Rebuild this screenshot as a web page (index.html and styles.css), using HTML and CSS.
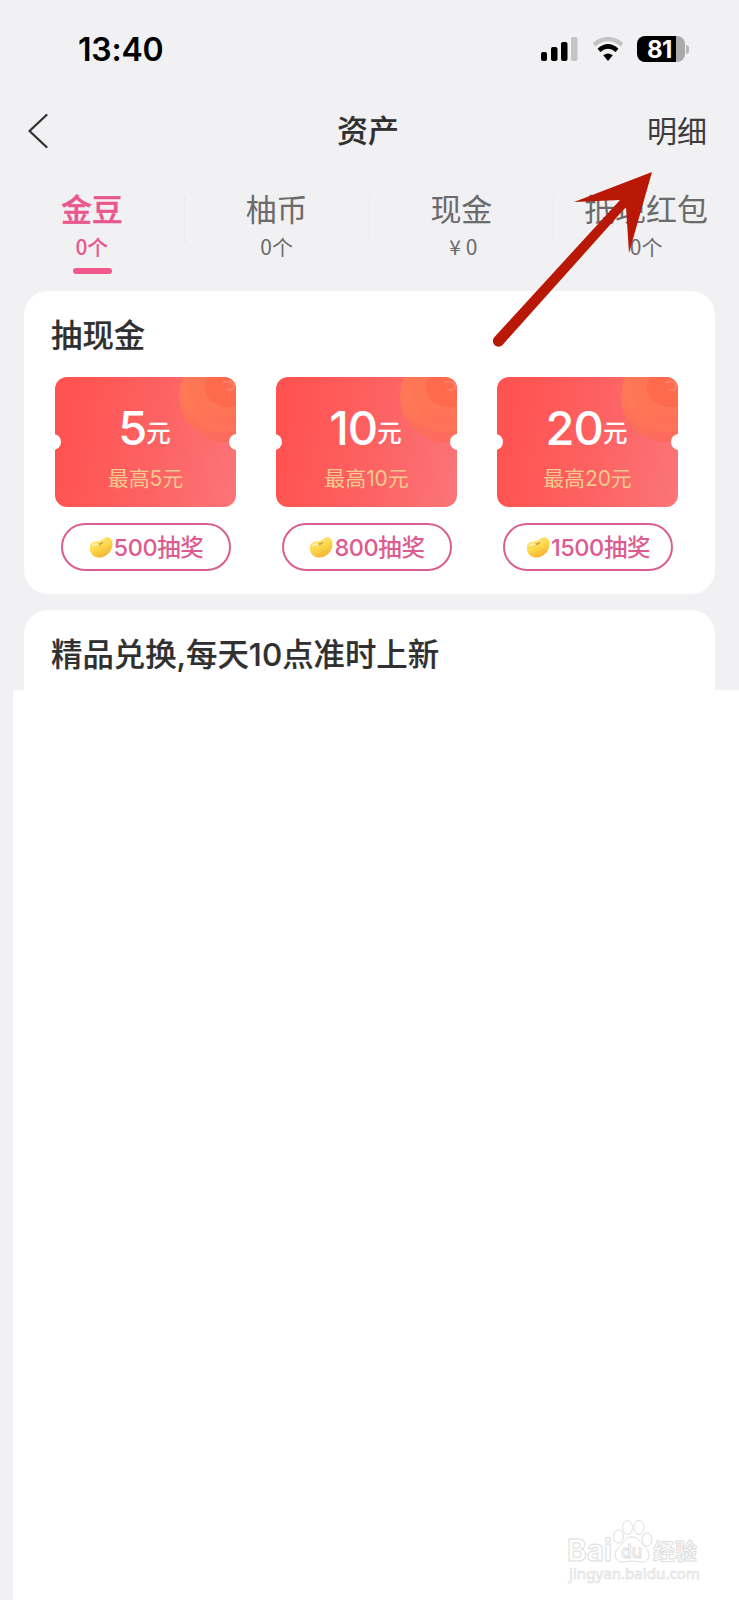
FILE: index.html
```html
<!DOCTYPE html>
<html lang="zh-CN">
<head>
<meta charset="utf-8">
<title>资产</title>
<link rel="stylesheet" href="styles.css">
</head>
<body>
<svg class="defs" width="0" height="0" aria-hidden="true">
  <defs>
    <linearGradient id="beanFill" x1="0.2" y1="0" x2="0.7" y2="1"><stop offset="0" stop-color="#ffeb8c"/><stop offset="0.5" stop-color="#fbd74c"/><stop offset="1" stop-color="#f5ae2c"/></linearGradient>
    <linearGradient id="ringFill" x1="0" y1="0" x2="0" y2="1"><stop offset="0" stop-color="#ff7656"/><stop offset="0.6" stop-color="#ff7655"/><stop offset="1" stop-color="#fd6a5c"/></linearGradient>
    <symbol id="bean" viewBox="0 0 24 22">
      <path d="M1 14C0 8.500 3 5.500 7 5.500C10 5.500 12 4.500 14 3C18 0 23 1 23.500 7C24 13 20 19 14 21C8 23 2 20 1 14Z" fill="url(#beanFill)"/>
      <path d="M4 9.500C5.500 8 7 8 8.500 8.300" stroke="#fff6bd" stroke-width="1.500" fill="none" stroke-linecap="round"/>
      <path d="M10 8C11.500 8.500 13 7.800 13.500 6.500" stroke="#9b7022" stroke-width=".9" fill="none" stroke-linecap="round"/>
    </symbol>
    <symbol id="medal" viewBox="0 0 60 68">
      <circle cx="47" cy="19" r="46" fill="url(#ringFill)"/>
      <path d="M4 0C-1 30 15 48 33 53C43 56 52 55 60 52V46C35 54 12 38 10 0Z" fill="#ff7f5e" opacity=".3"/>
      <ellipse cx="50" cy="10" rx="23" ry="20" fill="#ff694c"/>
      <path d="M45 6C50 3 56 5 56 9C56 13 52 14 48 12" fill="none" stroke="#ff8a77" stroke-width="2.500" opacity=".6"/>
    </symbol>
  </defs>
</svg>
<div class="screen">
  <div class="statusbar">
    <span class="clock">13:40</span>
    <div class="indicators">
      <svg class="signal" width="37" height="26" viewBox="0 0 37 26"><rect x="0" y="16" width="6" height="9" rx="2"/><rect x="10" y="11" width="6.500" height="14" rx="2"/><rect x="20" y="6" width="6.500" height="19" rx="2"/><rect x="30" y="1" width="6.500" height="24" rx="2" fill="#c4c4c6"/></svg>
      <svg class="wifi" width="32" height="26" viewBox="0 0 32 26"><path d="M2 8.700Q16-2.700 30 8.700" fill="none" stroke="#c4c4c6" stroke-width="4.400"/><path d="M7 14.300Q16 6.500 25 14.300" fill="none" stroke="#000" stroke-width="4.400"/><path d="M11.200 19.300Q16 15.500 20.800 19.300L16 25Z"/></svg>
      <div class="battery"><span class="level">81</span><span class="nub"></span></div>
    </div>
  </div>
  <header class="navbar">
    <svg class="back" width="22" height="36" viewBox="0 0 22 36"><path d="M19.500 2L2.500 18L19.500 34" fill="none" stroke="#333" stroke-width="2.400" stroke-linecap="round" stroke-linejoin="round"/></svg>
    <h1 class="title">资产</h1>
    <span class="detail">明细</span>
  </header>
  <nav class="tabs">
    <div class="tab active"><span class="name">金豆</span><span class="count">0个</span></div>
    <div class="tab"><span class="name">柚币</span><span class="count">0个</span></div>
    <div class="tab"><span class="name">现金</span><span class="count cash">¥ 0</span></div>
    <div class="tab"><span class="name">抵现红包</span><span class="count">0个</span></div>
  </nav>
  <section class="card draw">
    <h2 class="heading">抽现金</h2>
    <div class="offers">
      <div class="offer">
        <div class="ticket"><svg class="medal"><use href="#medal"/></svg><div class="amount">5<small>元</small></div><div class="limit">最高5元</div></div>
        <div class="button"><svg class="bean"><use href="#bean"/></svg><span>500抽奖</span></div>
      </div>
      <div class="offer">
        <div class="ticket"><svg class="medal"><use href="#medal"/></svg><div class="amount">10<small>元</small></div><div class="limit">最高10元</div></div>
        <div class="button"><svg class="bean"><use href="#bean"/></svg><span>800抽奖</span></div>
      </div>
      <div class="offer">
        <div class="ticket"><svg class="medal"><use href="#medal"/></svg><div class="amount">20<small>元</small></div><div class="limit">最高20元</div></div>
        <div class="button"><svg class="bean"><use href="#bean"/></svg><span>1500抽奖</span></div>
      </div>
    </div>
  </section>
  <section class="card exchange"><h2 class="heading">精品兑换,每天10点准时上新</h2></section>
  <main class="blank"></main>
  <svg class="arrow" width="160" height="180" viewBox="0 0 160 180"><path d="M160 0L82 30L128 28L2.500 165A5 5 0 0 0 10.500 173L134 35L137 81Z" fill="#b91807"/></svg>
  <div class="watermark">
    <svg width="140" height="70" viewBox="0 0 140 70" fill="#fff" stroke="#dedede" stroke-width="1">
      <text class="wm-brand" x="6" y="41" textLength="45" lengthAdjust="spacingAndGlyphs">Bai</text>
      <ellipse cx="57.500" cy="16.500" rx="5" ry="6.500"/><ellipse cx="66.500" cy="7.500" rx="5" ry="7"/><ellipse cx="78" cy="7.500" rx="5" ry="7"/><ellipse cx="86" cy="19.500" rx="5" ry="6.500"/>
      <path d="M71 17C64 17 62 24 57 28C52 33 54 42 61 42C66 42 67 41 71 41C75 41 77 42 81 42C89 42 90 33 85 28C80 24 78 17 71 17Z"/>
      <text class="wm-du" x="60" y="38" textLength="21" lengthAdjust="spacingAndGlyphs">du</text>
      <text class="wm-cjk" x="92" y="39">经验</text>
      <text class="wm-url" x="8" y="59" textLength="131" lengthAdjust="spacingAndGlyphs">jingyan.baidu.com</text>
    </svg>
  </div>
</div>
</body>
</html>
```
FILE: styles.css
```css
* { box-sizing: border-box; }
body { margin: 0; background: #f1f1f3; font-family: Inter, "Noto Sans CJK SC", sans-serif; color: #303030; }
h1, h2 { margin: 0; font-weight: 500; -webkit-text-stroke: .2px currentColor; }
.defs { display: block; }
.screen { position: relative; width: 739px; height: 1600px; display: flex; flex-direction: column; overflow: hidden; }
.statusbar { height: 98px; padding: 0 50px 0 78px; display: flex; justify-content: space-between; align-items: center; }
.clock { font-size: 32px; font-weight: 600; color: #000; line-height: 40px; letter-spacing: -.2px; padding-top: 2px; }
.indicators { display: flex; align-items: center; }
.wifi { margin: 0 13px 0 14px; }
.battery { display: flex; align-items: center; gap: 1px; }
.level { width: 48px; height: 26px; border-radius: 8px; background: linear-gradient(90deg, #000 39px, #aaaaac 39px); color: #fff; font-size: 24px; font-weight: 700; line-height: 27px; padding-left: 10px; letter-spacing: -.6px; }
.nub { width: 3px; height: 9px; border-radius: 0 4px 4px 0; background: #b9b9bb; }
.navbar { height: 66px; padding: 0 32px 0 29px; display: grid; grid-template-columns: 1fr auto 1fr; align-items: center; }
.back { margin-left: -2px; }
.title { font-size: 31px; line-height: 44px; }
.detail { font-size: 30px; line-height: 44px; justify-self: end; color: #3c3c3e; }
.tabs { height: 127px; padding-top: 23px; display: flex; }
.tab { flex: 1; display: flex; flex-direction: column; align-items: center; height: 96px; color: #6b6b6d; background: linear-gradient(#e9e9ec, #e9e9ec) right 8px / 1px 48px no-repeat; }
.tab:last-child { background: none; }
.name { font-size: 31px; line-height: 46px; white-space: nowrap; margin-left: -1px; }
.count { font-family: "Noto Sans CJK SC", sans-serif; font-size: 21px; line-height: 30px; margin: -2px 0 0 -1px; }
.cash { margin-left: 3px; }
.active { color: #e8588e; }
.active .name { font-weight: 500; -webkit-text-stroke: .4px currentColor; }
.active .count { font-weight: 500; }
.active::after { content: ""; width: 39px; height: 6px; border-radius: 3px; background: #f1588c; margin-top: 7px; }
.card { margin: 0 24px; padding: 0 28px; background: #fff; border-radius: 24px; }
.heading { font-size: 31.400px; line-height: 46px; margin-left: -1px; }
.draw { height: 303px; padding-top: 22px; margin-bottom: 16px; }
.offers { display: flex; gap: 40px; padding: 18px 0 0 3px; }
.offer { width: 181px; display: flex; flex-direction: column; align-items: center; }
.ticket { position: relative; width: 181px; height: 130px; border-radius: 12px; overflow: hidden; background: linear-gradient(100deg, #ff5351 10%, #fd6263 55%, #fb7577); display: flex; flex-direction: column; align-items: center; }
.ticket::before, .ticket::after { content: ""; position: absolute; top: 57px; width: 16px; height: 16px; border-radius: 50%; background: #fff; z-index: 1; }
.ticket::before { left: -10px; }
.ticket::after { right: -9px; }
.medal { position: absolute; right: -2px; top: 0; width: 60px; height: 68px; }
.amount { position: relative; color: #fff; font-size: 47px; font-weight: 500; line-height: 56px; margin: 23px 2px 0 0; letter-spacing: -1px; }
.amount small { position: relative; top: -3px; font-size: 24.500px; letter-spacing: 0; }
.limit { color: #f3ca8e; font-size: 21px; line-height: 30px; margin-top: 0; letter-spacing: -.1px; }
.button { width: 170px; height: 48px; margin-top: 16px; border: 2px solid #d95f92; border-radius: 24px; display: flex; align-items: center; justify-content: center; color: #db5c90; font-size: 23.500px; font-weight: 500; line-height: 40px; white-space: nowrap; letter-spacing: -.4px; padding-top: 1px; }
.bean { width: 24px; height: 22px; margin: 0 1px 2px 1px; }
.exchange { height: 80px; padding-top: 22px; border-radius: 24px 24px 0 0; }
.blank { flex: 1; margin-left: 13px; background: #fff; }
.arrow { position: absolute; left: 492px; top: 172px; }
.watermark { position: absolute; left: 561px; top: 1520px; }
.wm-brand { font: 700 30px Inter, sans-serif; }
.wm-du { font: 500 18px Inter, sans-serif; }
.wm-cjk { font: 700 22px "Noto Sans CJK SC", sans-serif; }
.wm-url { font: 400 15px "Noto Sans", sans-serif; stroke-width: .7px; }
```
